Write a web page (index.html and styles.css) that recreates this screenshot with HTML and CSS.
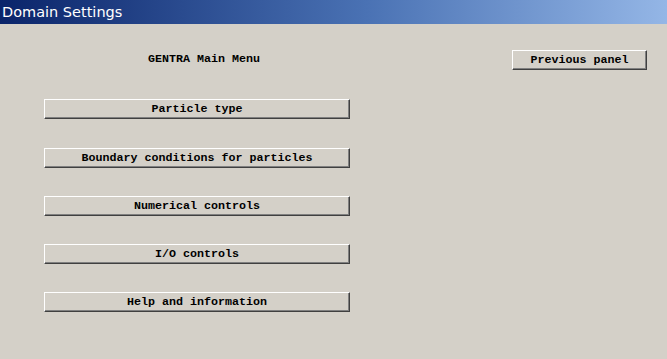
FILE: index.html
```html
<!DOCTYPE html>
<html lang="en">

<head>
  <meta charset="utf-8">
  <title>Domain Settings</title>
  <link rel="stylesheet" href="styles.css">
</head>

<body>
  <!-- Window caption -->
  <div class="caption">Domain Settings</div>

  <!-- Panel body -->
  <div class="panel">
    <div class="menu">
      <p class="heading">GENTRA Main Menu</p>
      <button class="btn wide">Particle type</button>
      <button class="btn wide">Boundary conditions for particles</button>
      <button class="btn wide">Numerical controls</button>
      <button class="btn wide">I/O controls</button>
      <button class="btn wide">Help and information</button>
    </div>
    <div class="side">
      <button class="btn narrow">Previous panel</button>
    </div>
  </div>
</body>

</html>
```

FILE: styles.css
```css
/* Classic dialog look */
body {
  margin: 0;
  background-color: #d4d0c8;
  font-family: "Liberation Mono", "Courier New", monospace;
}

.caption {
  height: 24px;
  line-height: 24px;
  padding-left: 2px;
  color: white;
  font-family: "DejaVu Sans", Tahoma, sans-serif;
  font-size: 14.5px;
  background: linear-gradient(to right, #0a246a 0%, #4a72b4 55%, #94b6e6 100%);
}

.panel {
  display: flex;
}

.menu {
  display: flex;
  flex-direction: column;
  gap: 28.3px;
  width: 306px;
  padding-left: 44px;
}

.heading {
  margin: 28px 0 5px 104px;
  height: 14px;
  line-height: 14px;
  font-size: 11.67px;
  font-weight: bold;
  color: black;
}

.btn {
  box-sizing: border-box;
  height: 20px;
  padding: 0;
  margin: 0;
  font-family: "Liberation Mono", "Courier New", monospace;
  font-size: 11.67px;
  font-weight: bold;
  color: black;
  background-color: #d4d0c8;
  border-top: 1px solid white;
  border-left: 1px solid white;
  border-right: 1px solid #404040;
  border-bottom: 1px solid #404040;
  box-shadow: inset -1px -1px 0 #808080;
}

.wide {
  width: 306px;
}

.side {
  padding: 26px 0 0 162px;
}

.narrow {
  width: 135px;
}
```
